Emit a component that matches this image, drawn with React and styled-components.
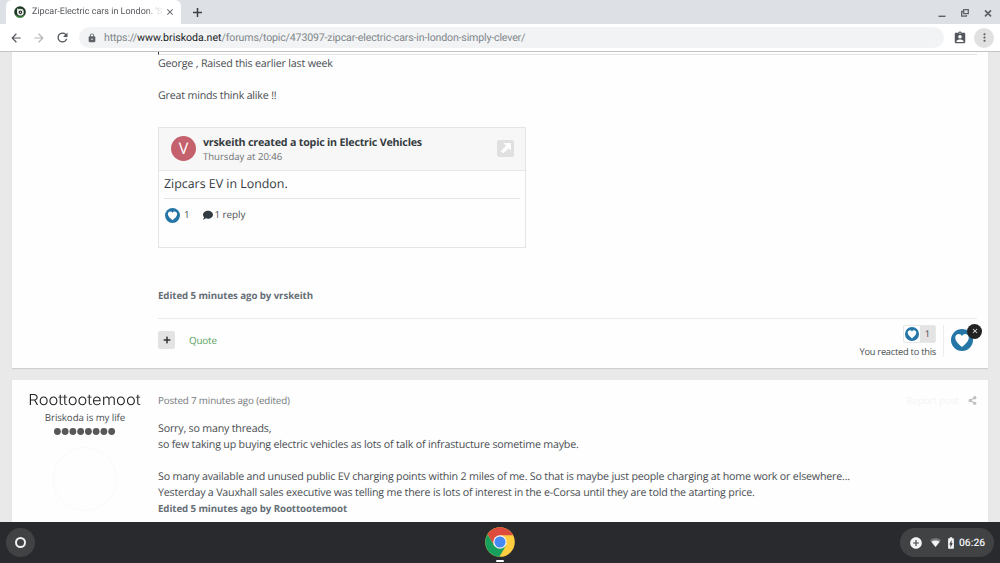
import React from 'react'
import styled, { createGlobalStyle } from 'styled-components'
import {
  MdArrowBack,
  MdArrowForward,
  MdRefresh,
  MdLock,
  MdAssignmentInd,
  MdMoreVert,
  MdClose,
  MdAddCircle,
  MdBatteryChargingFull,
} from 'react-icons/md'
import { FaComment, FaShareAlt, FaPlus } from 'react-icons/fa'

const Heart = ({ size }) => (
  <svg width={size} height={size} viewBox="0 0 24 24">
    <circle cx="12" cy="12" r="12" fill="#2576a7" />
    <path
      d="M12 19.6C8.6 16.7 4.6 13.6 4.6 9.6 4.6 7.2 6.4 5.5 8.5 5.5c1.5 0 2.8.8 3.5 2.2.7-1.4 2-2.2 3.5-2.2 2.1 0 3.9 1.7 3.9 4.1 0 4-4 7.1-7.4 10z"
      fill="#fff"
    />
  </svg>
)

const ChromeLogo = () => (
  <svg width="30" height="30" viewBox="0 0 30 30">
    <circle cx="15" cy="15" r="14.8" fill="#ffcd40" />
    <path d="M15 8.2H28.1A14.8 14.8 0 0 0 2.5 7.2L9.1 18.4z" fill="#dd4b3e" />
    <path d="M2.5 7.2A14.8 14.8 0 0 0 14.4 29.8L20.9 18.4 15 15 9.1 18.4z" fill="#17a05d" />
    <circle cx="15" cy="15" r="6.8" fill="#f1f1f1" />
    <circle cx="15" cy="15" r="5.5" fill="#4688f4" />
  </svg>
)

const Favicon = () => (
  <svg width="12" height="12" viewBox="0 0 12 12">
    <circle cx="6" cy="6" r="5.8" fill="#1e3a24" />
    <path d="M2 9.6A5.3 5.3 0 0 0 10 9.6" fill="none" stroke="#58a55c" strokeWidth="1.2" />
    <circle cx="6.4" cy="6.2" r="2.6" fill="#222" stroke="#e9ece9" strokeWidth="1.6" />
    <path d="M3.7 2.4V6.4" stroke="#e9ece9" strokeWidth="1.2" />
    <circle cx="6.4" cy="6.2" r="0.7" fill="#ddd" />
  </svg>
)

const OpenTopic = () => (
  <svg width="17" height="17" viewBox="0 0 17 17">
    <rect width="17" height="17" rx="2.5" fill="#e0e0e0" />
    <path d="M6.4 3H14v7.6l-2.3-2.3-5.3 5.3-2.6-2.6 5.3-5.3z" fill="#fdfdfd" />
  </svg>
)

const Pips = () => (
  <svg width="62" height="8" viewBox="0 0 62 8">
    {[...Array(8)].map((_, i) => (
      <circle key={i} cx={3.4 + i * 7.75} cy="3.5" r="3.4" fill="#585858" />
    ))}
  </svg>
)

const App = () => {
  return (
    <Screen>
      <GlobalStyle />
      <TabStrip>
        <Tab>
          <Favicon />
          <TabTitle>Zipcar-Electric cars in London. 'S</TabTitle>
          <MdClose size={10} color="#4d5156" />
        </Tab>
        <NewTab>
          <svg width="9" height="9" viewBox="0 0 9 9">
            <path d="M4.5 0v9M0 4.5h9" stroke="#3c4043" strokeWidth="1.5" />
          </svg>
        </NewTab>
        <WindowButtons>
          <svg width="8" height="12" viewBox="0 0 8 12">
            <path d="M0.5 9.3h7" stroke="#5f6368" strokeWidth="1.4" />
          </svg>
          <svg width="8" height="12" viewBox="0 0 8 12">
            <path d="M2.7 2.7h4.6v4H2.7z M2 4.5H.7v4.6h4.6V8" fill="none" stroke="#5f6368" strokeWidth="1.3" />
          </svg>
          <svg width="8" height="12" viewBox="0 0 8 12">
            <path d="M1 3.3l6 6M7 3.3l-6 6" stroke="#5f6368" strokeWidth="1.7" />
          </svg>
        </WindowButtons>
      </TabStrip>
      <Toolbar>
        <NavIcons>
          <MdArrowBack size={14} color="#54585d" />
          <MdArrowForward size={14} color="#b4b6b8" />
          <MdRefresh size={15} color="#54585d" />
        </NavIcons>
        <AddressBar>
          <MdLock size={10} color="#5f6368" />
          <Url>
            https://<b>www.briskoda.net</b>/forums/topic/473097-zipcar-electric-cars-in-london-simply-clever/
          </Url>
        </AddressBar>
        <MdAssignmentInd size={14} color="#54585d" />
        <MenuButton>
          <MdMoreVert size={13} />
        </MenuButton>
      </Toolbar>

      <Page>
        <Post $height={316}>
          <PostBody>
            <QuoteEnd />
            <Line>George , Raised this earlier last week</Line>
            <Line />
            <Line>Great minds think alike !!</Line>
            <Embed>
              <EmbedHeader>
                <Avatar>V</Avatar>
                <EmbedAuthor>
                  <AuthorName>vrskeith created a topic in Electric Vehicles</AuthorName>
                  <AuthorTime>Thursday at 20:46</AuthorTime>
                </EmbedAuthor>
                <OpenTopic />
              </EmbedHeader>
              <EmbedTitle>Zipcars EV in London.</EmbedTitle>
              <EmbedStats>
                <Heart size={15} />
                <Stat $left={4}>1</Stat>
                <CommentIcon />
                <Stat $left={2}>1 reply</Stat>
              </EmbedStats>
            </Embed>
            <Edited $top={40}>Edited 5 minutes ago by vrskeith</Edited>
            <Controls>
              <PlusButton>
                <FaPlus size={8} />
              </PlusButton>
              <QuoteLink>Quote</QuoteLink>
              <Reactions>
                <ReactionCount>
                  <HeartCell>
                    <Heart size={14} />
                  </HeartCell>
                  <Count>1</Count>
                </ReactionCount>
                <Reacted>You reacted to this</Reacted>
              </Reactions>
              <MyReaction>
                <Heart size={22} />
                <RemoveReaction>
                  <MdClose size={8} />
                </RemoveReaction>
              </MyReaction>
            </Controls>
          </PostBody>
        </Post>

        <Post $height={160}>
          <Author>
            <UserName>Roottootemoot</UserName>
            <Rank>Briskoda is my life</Rank>
            <Pips />
            <PhotoRing />
          </Author>
          <PostBody>
            <PostMeta>
              <Posted>Posted 7 minutes ago (edited)</Posted>
              <Report>Report post</Report>
              <FaShareAlt size={9} color="#c0c0c0" />
            </PostMeta>
            <Line>Sorry, so many threads,</Line>
            <Line>so few taking up buying electric vehicles as lots of talk of infrastucture sometime maybe.</Line>
            <Line />
            <Line>
              So many available and unused public EV charging points within 2 miles of me. So that is maybe just people
              charging at home work or elsewhere...
            </Line>
            <Line>Yesterday a Vauxhall sales executive was telling me there is lots of interest in the e-Corsa until they are told the atarting price.</Line>
            <Edited $top={0.6}>Edited 5 minutes ago by Roottootemoot</Edited>
          </PostBody>
        </Post>
      </Page>

      <Shelf>
        <Launcher>
          <LauncherRing />
        </Launcher>
        <ShelfApp>
          <ChromeLogo />
          <ActiveMark />
        </ShelfApp>
        <Tray>
          <MdAddCircle size={14} />
          <svg width="11" height="9" viewBox="0 0 11 9">
            <path d="M0 2.2C3.2-.4 7.8-.4 11 2.2L5.5 9z" fill="#77797b" />
            <path d="M1.3 3.8c2.5-1.7 5.9-1.7 8.4 0L5.5 9z" fill="#f1f3f4" />
          </svg>
          <MdBatteryChargingFull size={14} />
          <Clock>06:26</Clock>
        </Tray>
      </Shelf>
    </Screen>
  )
}

export default App

const GlobalStyle = createGlobalStyle`
* {
  box-sizing: border-box;
}
body {
  margin: 0;
  overflow: hidden;
}
svg {
  display: block;
  flex-shrink: 0;
}
`
const Screen = styled.div`
display: flex;
flex-direction: column;
width: 1000px;
height: 563px;
overflow: hidden;
font-family: "Open Sans", sans-serif;
color: #4a4e52;
white-space: nowrap;
text-rendering: geometricPrecision;
`
const TabStrip = styled.div`
display: flex;
height: 24px;
padding-left: 6px;
background-color: #dde0e5;
`
const Tab = styled.div`
display: flex;
align-items: center;
width: 175px;
height: 24px;
padding: 0 6px 0 8px;
border-radius: 6px 6px 0 0;
background-color: white;
`
const TabTitle = styled.div`
flex: 1;
margin-left: 6px;
overflow: hidden;
font-family: Roboto, sans-serif;
font-size: 9px;
line-height: 12px;
color: transparent;
background: linear-gradient(90deg, #505357 115px, #e4e4e4 128px);
background-clip: text;
`
const NewTab = styled.div`
display: flex;
align-items: center;
margin-left: 12px;
`
const WindowButtons = styled.div`
display: flex;
align-items: center;
gap: 15px;
margin-left: auto;
padding-right: 8px;
padding-top: 1px;
`
const Toolbar = styled.div`
display: flex;
align-items: center;
height: 28px;
padding: 0 6px 0 9px;
border-bottom: 1px solid #c3c3c3;
background-color: white;
`
const NavIcons = styled.div`
display: flex;
align-items: center;
gap: 9px;
width: 70px;
`
const AddressBar = styled.div`
display: flex;
align-items: center;
width: 865px;
height: 21px;
margin-right: 9px;
padding-left: 8px;
border-radius: 11px;
background-color: #f1f3f4;
`
const Url = styled.div`
margin-left: 7px;
font-family: Roboto, sans-serif;
font-size: 10.6px;
letter-spacing: -0.16px;
line-height: 14px;
color: #80868b;

b {
  font-weight: 400;
  letter-spacing: 0;
  color: #202124;
}
`
const MenuButton = styled.div`
display: flex;
justify-content: center;
align-items: center;
width: 20px;
height: 20px;
margin-left: 7px;
border-radius: 50%;
color: #5f6368;
background-color: #e1e1e1;
`
const Page = styled.div`
display: flex;
flex-direction: column;
gap: 12px;
height: 470px;
padding: 0 12px;
overflow: hidden;
background-color: #e9e9e9;
`
const Post = styled.div`
display: flex;
justify-content: flex-end;
flex-shrink: 0;
height: ${({ $height }) => $height}px;
padding-right: 11px;
background-color: #fefefe;
box-shadow: 0 1px 1px #d0d0d0;
`
const PostBody = styled.div`
width: 819px;
`
const QuoteEnd = styled.div`
height: 3px;
border-left: 1px solid #333;
border-bottom: 1px solid #e2e2e2;
`
const Line = styled.div`
height: 16.1px;
font-size: 10.7px;
letter-spacing: -0.2px;
line-height: 18px;
`
const Embed = styled.div`
width: 368px;
height: 121px;
margin-top: 23.7px;
border: 1px solid #e5e5e5;
`
const EmbedHeader = styled.div`
display: flex;
align-items: center;
height: 43px;
padding: 0 11px 0 12px;
border-bottom: 1px solid #e8e8e8;
background-color: #f7f7f7;
`
const Avatar = styled.div`
width: 25px;
height: 25px;
border-radius: 50%;
font-size: 16px;
line-height: 25px;
text-align: center;
color: white;
background-color: #c4616d;
`
const EmbedAuthor = styled.div`
flex: 1;
margin-left: 7px;
padding-top: 1px;
`
const AuthorName = styled.div`
font-size: 10.7px;
font-weight: 700;
letter-spacing: -0.21px;
line-height: 15px;
color: #353c41;
`
const AuthorTime = styled.div`
font-size: 9.6px;
letter-spacing: -0.03px;
line-height: 12px;
color: #707376;
`
const EmbedTitle = styled.div`
height: 28px;
margin: 0 5px;
border-bottom: 1px solid #e5e5e5;
font-size: 12.4px;
line-height: 25px;
color: #353c41;
`
const EmbedStats = styled.div`
display: flex;
align-items: center;
height: 33px;
padding-left: 6px;
`
const Stat = styled.div`
margin-left: ${({ $left }) => $left}px;
font-size: 9.8px;
letter-spacing: -0.05px;
line-height: 14px;
`
const CommentIcon = styled(FaComment)`
width: 10px;
height: 10px;
margin-left: 13px;
color: #353c41;
`
const Edited = styled.div`
margin-top: ${({ $top }) => $top}px;
font-size: 9.7px;
font-weight: 700;
letter-spacing: -0.08px;
line-height: 16px;
color: #666e76;
`
const Controls = styled.div`
display: flex;
height: 49px;
margin-top: 14px;
border-top: 1px solid #ececec;
`
const PlusButton = styled.div`
display: flex;
justify-content: center;
align-items: center;
width: 17px;
height: 18px;
margin-top: 12px;
border-radius: 2px;
color: #333;
background-color: #e3e3e3;
`
const QuoteLink = styled.div`
margin: 15px 0 0 14px;
font-size: 9.8px;
letter-spacing: -0.15px;
line-height: 14px;
color: #5aa35e;
`
const Reactions = styled.div`
display: flex;
flex-direction: column;
align-items: flex-end;
margin-left: auto;
padding-top: 6px;
`
const ReactionCount = styled.div`
display: flex;
width: 33px;
height: 18px;
border: 1px solid #e8e8e8;
border-radius: 2px;
`
const HeartCell = styled.div`
display: flex;
justify-content: center;
align-items: center;
width: 16px;
`
const Count = styled.div`
flex: 1;
font-size: 9.4px;
line-height: 16px;
text-align: center;
background-color: #e3e3e3;
`
const Reacted = styled.div`
margin-top: 2px;
font-size: 9.3px;
letter-spacing: -0.25px;
line-height: 13px;
`
const MyReaction = styled.div`
position: relative;
width: 34px;
height: 32px;
margin: 6px 0 0 7px;
padding: 4px 0 0 7px;
border-left: 1px solid #ededed;
`
const RemoveReaction = styled.div`
position: absolute;
top: -1px;
right: -5px;
display: flex;
justify-content: center;
align-items: center;
width: 15px;
height: 15px;
border-radius: 50%;
color: white;
background-color: #222;
`
const Author = styled.div`
display: flex;
flex-direction: column;
align-items: center;
width: 146px;
padding-top: 9px;
`
const UserName = styled.div`
font-family: Inter, sans-serif;
font-size: 15.2px;
font-weight: 300;
line-height: 21px;
color: #222;
transform: scaleX(1.09);
`
const Rank = styled.div`
margin-bottom: 2px;
font-size: 9.7px;
letter-spacing: -0.06px;
line-height: 16px;
`
const PhotoRing = styled.div`
width: 64px;
height: 64px;
margin-top: 11px;
border: 1px solid #fafafa;
border-radius: 50%;
`
const PostMeta = styled.div`
display: flex;
align-items: center;
height: 40px;
padding-top: 1px;
`
const Posted = styled.div`
flex: 1;
font-size: 9.8px;
letter-spacing: -0.14px;
line-height: 14px;
color: #75797d;
`
const Report = styled.div`
margin-right: 9px;
font-size: 9.8px;
letter-spacing: -0.1px;
line-height: 14px;
color: #f4f4f4;
`
const Shelf = styled.div`
display: flex;
justify-content: space-between;
align-items: center;
height: 41px;
padding: 0 6px;
background-color: #292a2d;
`
const Launcher = styled.div`
display: flex;
justify-content: center;
align-items: center;
width: 29px;
height: 29px;
margin-right: 65px;
border-radius: 50%;
background-color: #414244;
`
const LauncherRing = styled.div`
width: 11px;
height: 11px;
border: 2px solid #f1f1f1;
border-radius: 50%;
`
const ShelfApp = styled.div`
display: flex;
flex-direction: column;
align-items: center;
height: 41px;
padding-top: 5px;
`
const ActiveMark = styled.div`
width: 8px;
height: 2px;
margin-top: 3px;
border-radius: 1px;
background-color: white;
`
const Tray = styled.div`
display: flex;
align-items: center;
width: 94px;
height: 29px;
padding-left: 9px;
border-radius: 15px;
color: #f1f3f4;
background-color: #414244;

svg + svg {
  margin-left: 7px;
}
svg + svg + svg {
  margin-left: 3px;
}
`
const Clock = styled.div`
margin-left: 1px;
font-family: Roboto, sans-serif;
font-size: 10.3px;
font-weight: 500;
line-height: 14px;
`
